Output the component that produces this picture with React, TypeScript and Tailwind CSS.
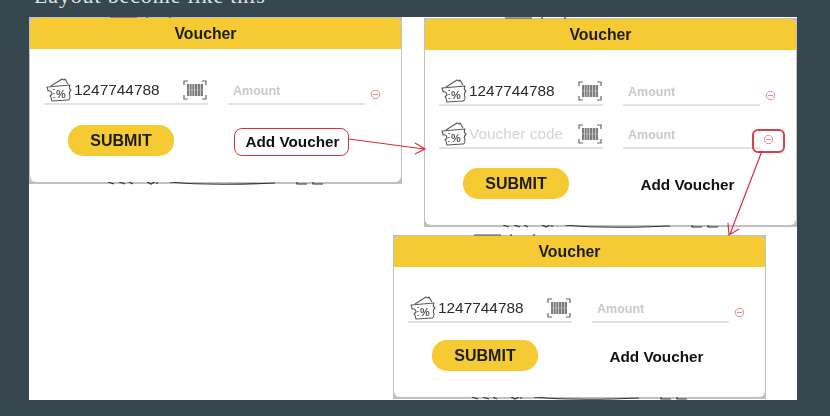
const TicketIcon = () => (
  <svg width="28" height="25" viewBox="0 0 28 25" fill="none" stroke="#55595c" strokeWidth="1.1" strokeLinejoin="round">
    <path d="M6 9 L17 2 L19 3 L20 2 L23 7" />
    <path d="M2 10 L25 8 C24 10 24 12 26 13 C24 15 24 17 25 19 C25 21 24 23 23 23 L7 24 C6 22 7 20 5 19 L7 17 C7 15 5 13 3 14 C3 12 2 11 2 10 Z" fill="#fff" />
    <path d="M9 12 V13 M9 16 V17 M9 20 V21" stroke="#444" strokeWidth="1.3" />
    <text x="11" y="21" fontSize="11" fontWeight="700" fill="#55595c" stroke="none" fontFamily="Liberation Sans, sans-serif">%</text>
  </svg>
);

const BarcodeIcon = () => (
  <svg width="24" height="20" viewBox="0 0 24 20" fill="none">
    <path d="M1 5V1H5M19 1H23V5M1 15V19H5M19 19H23V15" stroke="#666" strokeWidth="1.2" />
    <path d="M4 4H20V16H4Z" fill="#7c7c7c" />
    <path d="M6.5 4V16M9 4V16M11.5 4V16M14.5 4V16M17.5 4V16" stroke="#d8d8d8" strokeWidth="0.8" />
    <path d="M4 10H20" stroke="#c4c4c4" strokeWidth="0.6" />
  </svg>
);

const MinusIcon = () => (
  <svg width="11" height="11" viewBox="0 0 11 11" fill="none" stroke="#e58a90" strokeWidth="1">
    <circle cx="5.5" cy="5.5" r="4.2" />
    <path d="M3 5.5H8" />
  </svg>
);

// leftovers of the app screen that peek out above and below each card
const Scraps = () => (
  <>
    <svg className="absolute left-0 top-[-1px]" width="373" height="3" viewBox="0 0 373 3">
      <path d="M81 1H108M118 0V2M141 0V2" stroke="#444" strokeWidth="1.2" />
    </svg>
    <svg className="absolute bottom-[-1px] left-0" width="373" height="4" viewBox="0 0 373 4">
      <path d="M79 1L85 3M90 1L96 3M100 1L104 3M118 1L122 3L126 1M128 1V3M141 1C170 4 200 4 246 2M268 1V3H278M284 1V3H294" stroke="#333" strokeWidth="1.2" fill="none" />
    </svg>
  </>
);

type Row = { code?: string; flagged?: boolean };

function VoucherRow({ code, flagged }: Row) {
  return (
    <div className="flex h-[41px] items-stretch pl-[14px]">
      <div className="flex w-[164px] items-center border-b-2 border-[#e2e2e2] pl-[1px] pr-[1px] pt-[12px]">
        <TicketIcon />
        <span className={`flex-1 pl-[1px] text-[15.4px] whitespace-nowrap ${code ? "text-[#2b2b2b]" : "text-[#d4d4d4]"}`}>
          {code ?? "Voucher code"}
        </span>
        <BarcodeIcon />
      </div>
      <div className="ml-[20px] flex w-[137px] items-center border-b-2 border-[#e2e2e2] pl-[5px] pt-[16px] text-[12.5px] font-bold text-[#c9c9c9]">
        Amount
      </div>
      <div className="flex w-[21px] items-end justify-center pb-[5px]">
        {flagged ? (
          <div className="mb-[-9px] mr-[4px] flex h-[24px] w-[33px] shrink-0 items-center justify-center rounded-md border-2 border-[#d8404a] pb-[3px]">
            <MinusIcon />
          </div>
        ) : (
          <MinusIcon />
        )}
      </div>
    </div>
  );
}

function VoucherCard({
  rows,
  boxedAdd,
  className,
  submitGap,
}: {
  rows: Row[];
  boxedAdd?: boolean;
  className: string;
  submitGap: string;
}) {
  return (
    <div className={`absolute w-[373px] bg-[#c0c0c0] pb-[2px] pl-[1px] pr-[1px] pt-[1px] blur-[0.5px] ${className}`}>
      <Scraps />
      <div className="relative overflow-hidden rounded-md bg-white">
        <div className="flex h-[31px] items-center justify-center bg-[#f5ca32] pr-[20px] text-[15.8px] font-bold text-[#1c1c1c]">
          Voucher
        </div>
        <div className="flex flex-col gap-[2px] pt-[15px]">
          {rows.map((r, i) => (
            <VoucherRow key={i} {...r} />
          ))}
        </div>
        <div className={`flex items-start pb-[26px] pl-[38px] ${submitGap}`}>
          <div className="flex h-[31px] w-[106px] items-center justify-center rounded-[15px] bg-[#f5ca32] text-[16px] font-bold text-[#1c1c1c]">
            SUBMIT
          </div>
          <div
            className={`ml-[60px] mt-[3px] flex h-[28px] w-[115px] items-center justify-center rounded-lg pl-[2px] text-[15.3px] font-bold text-[#111] ${
              boxedAdd ? "border-[1.5px] border-[#d8303c]" : ""
            }`}
          >
            Add Voucher
          </div>
        </div>
      </div>
    </div>
  );
}

export default function App() {
  return (
    <div className="relative h-[416px] w-[830px] overflow-hidden bg-[#37474f] font-['Liberation_Sans',sans-serif]">
      <div className="flex h-[17px] items-end overflow-hidden pl-[34px] font-['Liberation_Serif',serif] text-[22px] leading-[26px] tracking-[0.85px] text-[#dfe4e6]">
        <span className="mb-[8px] block whitespace-nowrap">Layout become like this</span>
      </div>
      <div className="relative ml-[29px] h-[383px] w-[768px] bg-white">
        <VoucherCard className="left-0 top-0" submitGap="mt-[20px]" boxedAdd rows={[{ code: "1247744788" }]} />
        <VoucherCard
          className="left-[395px] top-[1px]"
          submitGap="mt-[19px]"
          rows={[{ code: "1247744788" }, { flagged: true }]}
        />
        <VoucherCard className="left-[364px] top-[218px]" submitGap="mt-[17px]" rows={[{ code: "1247744788" }]} />
        <svg className="absolute left-0 top-0" width="768" height="383" viewBox="0 0 768 383" fill="none" stroke="#d9303c" strokeWidth="1.2">
          <path d="M320 122L395 132M386 126L396 132L386 137" />
          <path d="M733 134L701 217M699 206L700 218L710 212" />
        </svg>
      </div>
    </div>
  );
}
